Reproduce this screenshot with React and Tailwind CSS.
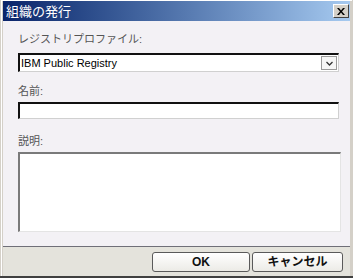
import React from "react";

const jp = { fontFamily: '"Liberation Sans", "Noto Sans CJK JP", sans-serif' };

function App() {
  return (
    <div className="w-[353px] h-[278px] bg-[#d4d0c8] flex flex-col overflow-hidden" style={jp}>
      <div className="flex flex-col flex-1 ml-[1px] mr-[1px] border-l border-t border-white pr-[2px] pl-[1px]">
        {/* title bar */}
        <div className="h-[20px] flex items-center justify-between bg-gradient-to-r from-[#0a246a] to-[#a6caf0] pl-[3px] pr-[1px]">
          <span className="text-white text-[13px] leading-none">組織の発行</span>
          <button className="w-[16px] h-[14px] bg-[#d4d0c8] border border-t-white border-l-white border-r-[#404040] border-b-[#404040] flex items-center justify-center">
            <svg width="8" height="7" viewBox="0 0 8 7">
              <path d="M0 0h2l2 2.5L6 0h2L5 3.5 8 7H6L4 4.5 2 7H0l3-3.5z" fill="#000" />
            </svg>
          </button>
        </div>

        {/* body */}
        <div className="flex-1 bg-[#f3f1f5] pl-[15px] pr-[11px] flex flex-col">
          <div className="mt-[11px] text-[11px] leading-[14px] text-[#555]">レジストリプロファイル:</div>
          <div className="mt-[7px] h-[19px] flex items-center bg-white border-t-2 border-l-2 border-[#111] border-r border-b border-r-[#d0d0d0] border-b-[#d0d0d0]">
            <span className="flex-1 text-[11px] leading-none text-black pl-[1px]">IBM Public Registry</span>
            <div className="w-[16px] h-[14px] mr-[1px] bg-[#f6f6f6] border border-[#9a9a9a] flex items-center justify-center">
              <svg width="7" height="5" viewBox="0 0 7 5">
                <path d="M0.5 1 L3.5 4 L6.5 1" fill="none" stroke="#333" strokeWidth="1.3" />
              </svg>
            </div>
          </div>

          <div className="mt-[12px] text-[11px] leading-[14px] text-[#555]">名前:</div>
          <div className="mt-[4px] h-[17px] bg-white border-t-2 border-l-2 border-[#111] border-r border-b border-r-[#d0d0d0] border-b-[#d0d0d0]"></div>

          <div className="mt-[15px] text-[11px] leading-[14px] text-[#555]">説明:</div>
          <div className="mt-[4px] h-[80px] bg-white border-t-2 border-l-2 border-[#7a7a7a] border-r border-b border-r-[#e4e4e4] border-b-[#e4e4e4] mr-[-2px]"></div>
        </div>

        {/* footer */}
        <div className="h-[30px] bg-[#e4e3dc] border-t border-[#6f6f78] flex items-start justify-end pt-[5px] pr-[7px] gap-[2px]">
          <button className="w-[98px] h-[20px] rounded-[3px] border border-[#5a5a5a] bg-gradient-to-b from-white to-[#ecebe6] text-[12px] font-bold leading-none text-[#111]">
            OK
          </button>
          <button className="w-[91px] h-[20px] rounded-[3px] border border-[#5a5a5a] bg-gradient-to-b from-white to-[#ecebe6] text-[12px] font-bold leading-none text-[#111]">
            キャンセル
          </button>
        </div>
      </div>
      <div className="h-[2px] bg-[#404040]"></div>
    </div>
  );
}

export default App;
